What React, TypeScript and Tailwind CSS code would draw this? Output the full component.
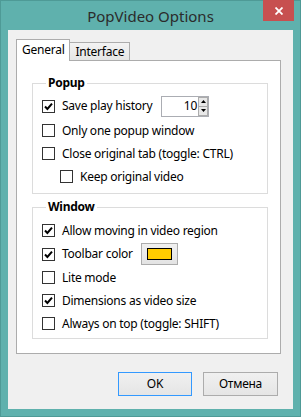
import type { ReactNode } from "react";

const font = { fontFamily: '"Noto Sans", "Open Sans", sans-serif' };

function Check({ checked }: { checked?: boolean }) {
  return (
    <span className="flex h-[13px] w-[13px] shrink-0 items-center justify-center border border-[#333333] bg-white">
      {checked && (
        <svg width="9" height="9" viewBox="0 0 9 9">
          <path d="M1 4.5 L3.4 7 L8 1.6" fill="none" stroke="#000" strokeWidth="2" />
        </svg>
      )}
    </span>
  );
}

function Row({
  checked,
  label,
  h = "h-[23px]",
  indent,
  children,
}: {
  checked?: boolean;
  label: ReactNode;
  h?: string;
  indent?: boolean;
  children?: ReactNode;
}) {
  return (
    <div className={`flex items-center ${h} ${indent ? "pl-[18px]" : ""}`}>
      <Check checked={checked} />
      <span className="ml-[7px] whitespace-nowrap">{label}</span>
      {children}
    </div>
  );
}

function Spinner() {
  return (
    <div className="flex h-[21px] w-[48px] border border-[#abadb3] bg-white">
      <div className="flex flex-1 items-center justify-end pr-[1px] text-[12px]">10</div>
      <div className="flex w-[10px] flex-col">
        <button className="flex flex-1 items-center justify-center border border-[#acacac] bg-[#e8e8e8]">
          <svg width="5" height="3" viewBox="0 0 5 3">
            <path d="M0 3 L2.5 0 L5 3 Z" fill="#000" />
          </svg>
        </button>
        <button className="flex flex-1 items-center justify-center border border-t-0 border-[#acacac] bg-[#e8e8e8]">
          <svg width="5" height="3" viewBox="0 0 5 3">
            <path d="M0 0 L2.5 3 L5 0 Z" fill="#000" />
          </svg>
        </button>
      </div>
    </div>
  );
}

export default function App() {
  return (
    <div
      className="flex h-[417px] w-[301px] flex-col border border-[#4e9a96] bg-[#5fb1ad] text-[12px] tracking-[-0.25px] text-black"
      style={font}
    >
      {/* title bar */}
      <div className="grid h-[29px] grid-cols-[1fr_auto_1fr]">
        <div />
        <div className="flex items-center pt-[1px] text-[15px] tracking-normal text-[#2b2b2b]">PopVideo Options</div>
        <div className="flex justify-end pr-[6px]">
          <button className="-mt-px flex h-[21px] w-[31px] items-center justify-center bg-[#c75050]">
            <svg width="8" height="8" viewBox="0 0 8 8">
              <path d="M0.5 0.5 L7.5 7.5 M7.5 0.5 L0.5 7.5" stroke="#fff" strokeWidth="1.8" />
            </svg>
          </button>
        </div>
      </div>

      {/* client */}
      <div className="mx-[7px] flex h-[379px] flex-col bg-[#f0f0f0] pl-[8px] pt-[9px]">
        {/* tabs */}
        <div className="flex h-[21px] items-end">
          <div className="relative z-10 -mb-px flex h-[22px] items-center border border-b-0 border-[#acacac] bg-white px-[5px] pb-[2px]">
            General
          </div>
          <div className="-ml-px flex h-[18px] items-center border border-b-0 border-[#acacac] bg-gradient-to-b from-[#f3f3f3] to-[#e5e5e5] px-[5px]">
            Interface
          </div>
        </div>

        {/* panel */}
        <div className="flex w-[265px] flex-col border border-[#acacac] bg-white pb-[14px] pl-[15px] pr-[12px] pt-[14px]">
          <fieldset className="border border-[#dcdcdc] pb-[5px] pl-[9px] pt-[2px]">
            <legend className="ml-[4px] px-[2px] text-[12px] font-bold leading-[16px]">Popup</legend>
            <Row checked label={<span className="inline-block w-[99px]">Save play history</span>} h="h-[26px]">
              <Spinner />
            </Row>
            <Row label="Only one popup window" />
            <Row label="Close original tab (toggle: CTRL)" />
            <Row label="Keep original video" indent />
          </fieldset>

          <fieldset className="mt-[5px] border border-[#dcdcdc] pb-[3px] pl-[9px] pt-[4px]">
            <legend className="ml-[4px] px-[2px] text-[12px] font-bold leading-[16px]">Window</legend>
            <Row checked label="Allow moving in video region" />
            <Row checked label={<span className="inline-block w-[79px]">Toolbar color</span>} h="h-[24px]">
              <button className="flex h-[22px] w-[37px] items-center justify-center border border-[#acacac] bg-gradient-to-b from-[#f0f0f0] to-[#e3e3e3]">
                <span className="h-[12px] w-[25px] border border-black bg-[#ffcc00]" />
              </button>
            </Row>
            <Row label="Lite mode" />
            <Row checked label="Dimensions as video size" />
            <Row label="Always on top (toggle: SHIFT)" />
          </fieldset>
        </div>

        {/* buttons */}
        <div className="mt-[18px] flex gap-[11px] pl-[102px]">
          <button className="h-[24px] w-[74px] border border-[#3399ff] bg-gradient-to-b from-[#f0f0f0] to-[#e5e5e5]">
            OK
          </button>
          <button className="h-[24px] w-[75px] border border-[#acacac] bg-gradient-to-b from-[#f0f0f0] to-[#e5e5e5]">
            Отмена
          </button>
        </div>
      </div>
    </div>
  );
}
